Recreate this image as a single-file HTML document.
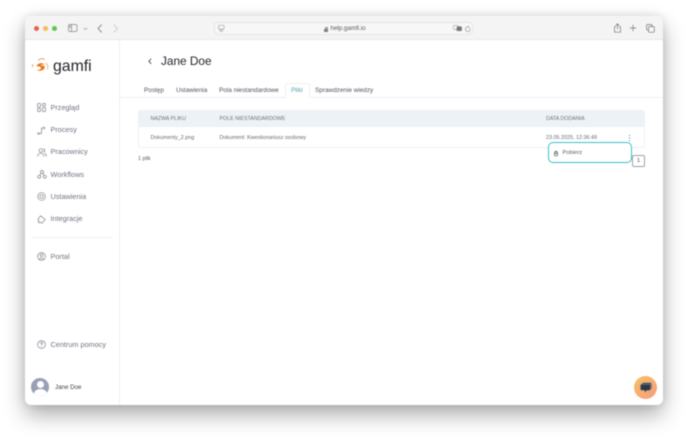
<!DOCTYPE html>
<html lang="pl"><head><meta charset="utf-8"><title>Jane Doe - gamfi</title>
<style>
html,body{margin:0;padding:0;width:688px;height:438px;overflow:hidden;background:#fff}
body{font-family:"Liberation Sans",sans-serif;position:relative}
#root{position:absolute;left:0;top:0;width:688px;height:438px;filter:blur(.4px)}
.a{position:absolute;white-space:nowrap;line-height:1}
#win{position:absolute;left:25px;top:16px;width:638px;height:389px;background:#fff;border-radius:6px;box-shadow:0 10px 22px rgba(0,0,0,.32),0 0 10px rgba(0,0,0,.12);overflow:hidden}
#bar{position:absolute;left:0;top:0;width:638px;height:24px;background:#f4f4f4;border-bottom:1px solid #e8e8e8;box-sizing:border-box}
.nav{font-size:7.3px;color:#6f7480}
.tab{font-size:6.4px;color:#4d5560;top:87.5px}
.th{font-size:5.3px;color:#687380;top:117px}
.td{font-size:5.4px;color:#626b75;top:135.500px}
svg{position:absolute;overflow:visible;fill:none;stroke:#7d828c;stroke-width:.7;stroke-linecap:round;stroke-linejoin:round}
</style></head><body><div id="root">
<div id="win"><div id="bar"></div>
<div class="a" style="left:94px;top:24px;width:1px;height:365px;background:#eef0f2"></div>
</div>

<!-- traffic lights -->
<div class="a" style="left:33.5px;top:25.5px;width:5.5px;height:5.5px;border-radius:50%;background:#ec5f56"></div>
<div class="a" style="left:42.5px;top:25.5px;width:5.5px;height:5.5px;border-radius:50%;background:#f4bd4f"></div>
<div class="a" style="left:51.5px;top:25.5px;width:5.5px;height:5.5px;border-radius:50%;background:#5fc454"></div>
<svg style="left:68px;top:24px" width="10" height="9" viewBox="0 0 10 9"><rect x=".5" y=".5" width="8.5" height="7" rx="1.2" stroke="#888"/><path d="M3.5 .5v7" stroke="#888"/><path d="M1.2 2h1.4M1.2 3.5h1.4" stroke="#888"/></svg>
<svg style="left:83px;top:27px" width="5" height="4" viewBox="0 0 5 4"><path d="M.8 1l1.700 1.600L4.200 1" stroke="#999" stroke-width=".6"/></svg>
<svg style="left:97px;top:24px" width="6" height="9" viewBox="0 0 6 9"><path d="M4.500 .8L1 4.500l3.500 3.700" stroke="#777" stroke-width=".8"/></svg>
<svg style="left:113px;top:24px" width="6" height="9" viewBox="0 0 6 9"><path d="M1 .8l3.500 3.700L1 8.200" stroke="#c4c4c4" stroke-width=".8"/></svg>

<!-- url bar -->
<div class="a" style="left:214px;top:22px;width:259px;height:13px;background:#f7f7f7;border:1px solid #e6e6e6;border-radius:4px;box-sizing:border-box"></div>
<svg style="left:218px;top:25px" width="7" height="7" viewBox="0 0 7 7" stroke-width=".6"><rect x=".5" y=".3" width="5.600" height="3.800" rx=".8" stroke="#a5a5a5"/><path d="M1.500 5.200h3.600M2 6.500h2.600" stroke="#a5a5a5"/></svg>
<div class="a" style="left:324px;top:29px;width:3.600px;height:2.600px;background:#808080;border-radius:.5px"></div>
<div class="a" style="left:324.800px;top:27.200px;width:1.600px;height:1.800px;border:.5px solid #808080;border-bottom:0;border-radius:1.500px 1.500px 0 0"></div>
<div class="a" style="left:330.500px;top:26px;font-size:6.200px;color:#5c5c5c">help.gamfi.io</div>
<svg style="left:453px;top:25px" width="9" height="7" viewBox="0 0 9 7" stroke-width=".5"><rect x=".5" y=".5" width="4.500" height="4" rx=".6" stroke="#b0b0b0"/><rect x="4" y="1.700" width="4.500" height="4" rx=".6" fill="#777" stroke="#777"/></svg>
<svg style="left:465px;top:25.500px" width="6" height="6" viewBox="0 0 6 6" stroke-width=".5"><path d="M5 2.200A2.400 2.400 0 1 1 3 .8M3 .1l1 .8-1 .7" stroke="#a0a0a0"/></svg>
<svg style="left:613px;top:23px" width="9" height="10" viewBox="0 0 9 10" stroke-width=".6"><path d="M2.800 3.600H1.500v5.600h6V3.600H6.200M4.500 6V.8M3 2.200L4.500.8 6 2.200" stroke="#777"/></svg>
<svg style="left:629px;top:24px" width="8" height="8" viewBox="0 0 8 8" stroke-width=".7"><path d="M4 1v6M1 4h6" stroke="#777"/></svg>
<svg style="left:646px;top:23.500px" width="9" height="9" viewBox="0 0 9 9" stroke-width=".6"><rect x=".5" y=".5" width="5.500" height="5.500" rx="1.200" stroke="#777"/><rect x="2.500" y="2.500" width="5.800" height="5.800" rx="1.200" fill="#f4f4f4" stroke="#777"/></svg>

<!-- logo -->
<svg style="left:31px;top:57px" width="18" height="16" viewBox="0 0 18 16">
<path d="M7.500 3.200C9 1.500 11.500 1.200 13.500 2.300" stroke="#f0a060" stroke-width="1"/>
<path d="M5.500 9.500C6.500 6 11.500 5 13.500 7.800 11.800 7.200 10.200 7.700 9.800 8.700 12.500 8 14.500 9 13.500 11.300 12.300 14 8 14.300 5.500 13 8.500 13 10.500 12 9.800 10.600 9 9.500 7.500 9.300 5.500 9.500Z" fill="#e9791f" stroke="none"/>
<path d="M15 6.300C16.800 8 17.300 10 16.300 11.800" stroke="#f2b37a" stroke-width="1"/>
<path d="M1 7.500L2 7 2 10 1 10.300Z" fill="#ef9a62" stroke="none"/>
</svg>
<div class="a" style="left:53px;top:58.500px;font-size:15.800px;color:#1f2328">gamfi</div>

<!-- nav -->
<svg style="left:37px;top:103px" width="9" height="9" viewBox="0 0 9 9"><rect x=".5" y=".5" width="3" height="3.600" rx=".5"/><rect x="5.500" y=".5" width="3" height="2.400" rx=".5"/><rect x=".5" y="5.500" width="3" height="3" rx=".5"/><rect x="5.500" y="4.500" width="3" height="4" rx=".5"/></svg>
<div class="a nav" style="left:50.500px;top:103.500px">Przegląd</div>
<svg style="left:37px;top:125.500px" width="9" height="9" viewBox="0 0 9 9"><circle cx="1.500" cy="7.500" r=".8"/><path d="M2.500 7.500H4.500V2H6"/><path d="M6.500 .8l1.500 1.200-1.500 1.200" /></svg>
<div class="a nav" style="left:50.500px;top:126px">Procesy</div>
<svg style="left:37px;top:147.500px" width="10" height="9" viewBox="0 0 10 9"><circle cx="3.800" cy="2.500" r="1.800"/><path d="M.8 8.300C.8 6 2 5.300 3.800 5.300S6.800 6 6.800 8.300M6.500 .9A1.700 1.700 0 0 1 6.500 4.200M8 5.600C9 6.200 9.300 7 9.300 8.300"/></svg>
<div class="a nav" style="left:50.500px;top:148px">Pracownicy</div>
<svg style="left:37px;top:170px" width="10" height="9" viewBox="0 0 10 9"><circle cx="5" cy="2" r="1.500"/><circle cx="2.200" cy="6.800" r="1.500"/><circle cx="7.800" cy="6.800" r="1.500"/><path d="M4 3.300L3 5.300M6 3.300l1 2"/></svg>
<div class="a nav" style="left:50.500px;top:170.500px">Workflows</div>
<svg style="left:37px;top:192px" width="9" height="9" viewBox="0 0 9 9"><circle cx="4.500" cy="4.500" r="3.800"/><circle cx="4.500" cy="4.500" r="1.700"/></svg>
<div class="a nav" style="left:50.500px;top:193px">Ustawienia</div>
<svg style="left:37px;top:214.500px" width="9" height="9" viewBox="0 0 9 9"><path d="M3.500 .8L8.300 4.500 4.800 8.300 3.500 7 2.200 8 1 6.800 2 5.500 .8 4.300Z"/></svg>
<div class="a nav" style="left:50.500px;top:215px">Integracje</div>
<div class="a" style="left:32px;top:237px;width:81px;height:1px;background:#eff0f2"></div>
<svg style="left:37px;top:252px" width="9" height="9" viewBox="0 0 9 9"><circle cx="4.500" cy="4.500" r="3.900"/><circle cx="4.500" cy="3.500" r="1.300"/><path d="M2.300 7.300C2.800 6 6.200 6 6.700 7.300"/></svg>
<div class="a nav" style="left:50.500px;top:252.500px">Portal</div>
<svg style="left:37px;top:340px" width="9" height="9" viewBox="0 0 9 9"><circle cx="4.500" cy="4.500" r="3.900"/><path d="M3.300 3.500C3.400 2 5.700 2 5.700 3.500 5.700 4.400 4.500 4.400 4.500 5.300M4.500 6.600v.1"/></svg>
<div class="a nav" style="left:50.500px;top:340.500px">Centrum pomocy</div>

<!-- user -->
<div class="a" style="left:31px;top:378px;width:18px;height:18px;border-radius:50%;background:#9aa0b4;overflow:hidden">
<div class="a" style="left:5.500px;top:3px;width:7px;height:7px;border-radius:50%;background:#fff"></div>
<div class="a" style="left:2.500px;top:11px;width:13px;height:9px;border-radius:50%;background:#fff"></div>
</div>
<div class="a" style="left:55px;top:385px;font-size:6.200px;color:#3e444c">Jane Doe</div>

<!-- header -->
<svg style="left:147px;top:57px" width="6" height="9" viewBox="0 0 6 9"><path d="M4 2L1.800 4.300 4 6.600" stroke="#444c54" stroke-width=".9"/></svg>
<div class="a" style="left:161px;top:55.800px;font-size:11.800px;color:#20252b">Jane Doe</div>

<!-- tabs -->
<div class="a" style="left:120px;top:97px;width:543px;height:1px;background:#eef0f2"></div>
<div class="a" style="left:284.500px;top:82.500px;width:25px;height:15px;background:#fff;border:1px solid #eef0f2;border-bottom:0;border-radius:3px 3px 0 0;box-sizing:border-box"></div>
<div class="a tab" style="left:144px">Postęp</div>
<div class="a tab" style="left:176px">Ustawienia</div>
<div class="a tab" style="left:219px">Pola niestandardowe</div>
<div class="a tab" style="left:291px;color:#5f9fb0">Pliki</div>
<div class="a tab" style="left:315px">Sprawdzenie wiedzy</div>

<!-- table -->
<div class="a" style="left:138px;top:110px;width:507px;height:38px;border:1px solid #eef0f3;border-radius:3px;box-sizing:border-box"></div>
<div class="a" style="left:138px;top:110px;width:507px;height:17px;background:#edf2f6;border-radius:3px 3px 0 0"></div>
<div class="a th" style="left:150.500px">NAZWA PLIKU</div>
<div class="a th" style="left:219.500px">POLE NIESTANDARDOWE</div>
<div class="a th" style="left:546px">DATA DODANIA</div>
<div class="a td" style="left:150.500px">Dokumenty_2.png</div>
<div class="a td" style="left:219.500px">Dokument: Kwestionariusz osobowy</div>
<div class="a td" style="left:546px">23.05.2025, 12:36:49</div>
<div class="a" style="left:628.500px;top:134.500px;width:1.500px;height:1.500px;background:#3f4852;box-shadow:0 2.500px 0 #3f4852,0 5px 0 #3f4852;border-radius:50%"></div>
<div class="a" style="left:138px;top:156.800px;font-size:5.400px;color:#4f5862">1 plik</div>

<!-- pagination -->
<div class="a" style="left:632px;top:155px;width:13px;height:12px;border:1px solid #9aa3ac;border-radius:2px;box-sizing:border-box;background:#fff;font-size:5.500px;color:#3f4852;text-align:center;line-height:11px">1</div>

<!-- popup -->
<div class="a" style="left:548px;top:142px;width:84px;height:21px;background:#fff;border:1.500px solid #3cc0c8;border-radius:5px;box-sizing:border-box"></div>
<svg style="left:553.500px;top:150.500px" width="4" height="5" viewBox="0 0 4 5" stroke-width=".6"><rect x=".5" y="1" width="3" height="3.800" rx=".4" stroke="#555e68"/><path d="M1.300 .3h1.400M.5 2.600h3" stroke="#555e68"/></svg>
<div class="a" style="left:562.500px;top:151px;font-size:5.800px;color:#555e68">Pobierz</div>

<!-- chat -->
<div class="a" style="left:634px;top:376px;width:23px;height:23px;border-radius:50%;background:linear-gradient(135deg,#f6c262,#f99a7c)"></div>
<svg style="left:640px;top:382px" width="12" height="11" viewBox="0 0 12 11" stroke="none"><path d="M2 2.500C2 1.300 3 .8 4 .8H10C11 .8 11.500 1.500 11.500 2.500V6.500L10 6.500V2.300H2Z" fill="#3a4350"/><path d="M1.500 2.300H9.500C10.300 2.300 10.500 3 10.500 3.500V7C10.500 8 10 8.300 9 8.300H6.800L5.500 10 4.200 8.300H2C1 8.300 .5 7.800 .5 7V3.300C.5 2.700 1 2.300 1.500 2.300Z" fill="#2f3743"/></svg>
</div></body></html>
